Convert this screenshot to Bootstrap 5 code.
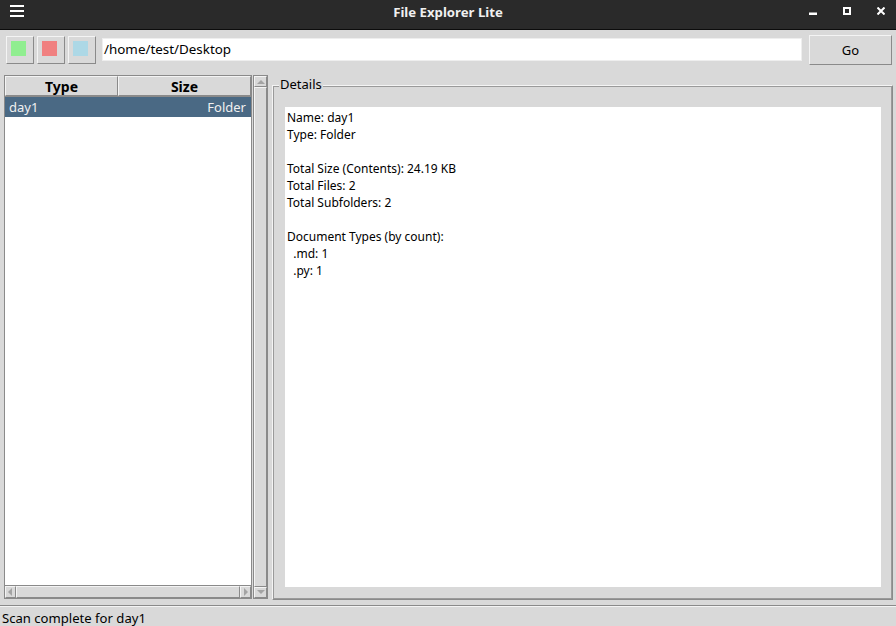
<!DOCTYPE html>
<html lang="en">
<head>
  <meta charset="UTF-8" />
  <title>File Explorer Lite</title>
  <link href="https://cdn.jsdelivr.net/npm/bootstrap@5.3.0/dist/css/bootstrap.min.css" rel="stylesheet" />
  <style>
    html, body { height: 100%; overflow: hidden; }
    body { background: #d9d9d9; font-family: "Noto Sans", sans-serif; font-size: 12px; color: #000; }
    .raised { border: 1px solid; border-color: #f4f4f4 #8a8a8a #8a8a8a #f4f4f4; }
    .app-window { width: 896px; height: 626px; }
    .title-bar { height: 30px; background: #2a2a2a; border-bottom: 1px solid #0c0c0c; color: #f0f0f0; padding: 5px 11px 0 10px; }
    .title-text { font-weight: 700; font-size: 13.2px; position: absolute; left: 0; right: 0; text-align: center; line-height: 25px; top: 0; }
    .win-btns { margin-left: auto; gap: 26px; padding-top: 2px; }
    .tool-row { padding: 5px 4px 0 6px; height: 45px; }
    .swatch-btn { width: 28px; height: 28px; background: #d9d9d9; margin-right: 3px; margin-top: 1px; padding: 0 3px 3px 0; }
    .swatch { width: 15px; height: 15px; }
    .sw-green { background: #90ee90; }
    .sw-red { background: #f08080; }
    .sw-blue { background: #add8e6; }
    .path-field { width: 700px; height: 23px; background: #fff; margin: 3px 7px 0 3px; padding-left: 1px; font-size: 13.4px; line-height: 21px; border: 1px solid #eeeeee; }
    .go-btn { width: 83px; height: 30px; background: #d9d9d9; font-size: 13px; line-height: 28px; text-align: center; }
    .body-row { padding: 0 3px 0 4px; height: 530px; }
    .left-pane { width: 264px; }
    .tree-wrap { width: 248px; height: 524px; margin-right: 1px; border: 1px solid #8a8a8a; background: #fff; }
    .tree-head { height: 21px; background: #d9d9d9; font-weight: 700; font-size: 14px; line-height: 19px; text-align: center; border-bottom: 1px solid #8a8a8a; }
    .head-type { width: 113px; }
    .tree-row { height: 20px; background: #4a6984; color: #f0f0f0; font-size: 13px; line-height: 20px; padding: 0 5px 0 4px; }
    .tree-fill { flex: 1 1 auto; }
    .hscroll { height: 13px; background: #d9d9d9; border-top: 1px solid #8a8a8a; }
    .hscroll-end { width: 11px; }
    .vscroll { width: 15px; height: 524px; background: #d9d9d9; border: 1px solid #8a8a8a; }
    .scroll-end { height: 11px; background: #d9d9d9; flex: 0 0 auto; }
    .scroll-thumb { flex: 1 1 auto; }
    .details-pane { width: 621px; margin-left: 4px; padding-top: 10px; position: relative; }
    .details-frame { height: 515px; padding: 20px 10px 11px 11px; border: 2px solid; border-color: #f4f4f4 #8a8a8a #8a8a8a #f4f4f4; outline: 1px solid #9a9a9a; outline-offset: -2px; }
    .details-label { position: absolute; top: 0; left: 7px; background: #d9d9d9; font-size: 13px; line-height: 18px; padding: 0 1px; }
    .details-text { background: #fff; height: 100%; padding: 2px 2px 1px; font-size: 12px; line-height: 17px; white-space: pre; }
    .status-row { height: 21px; border-top: 1px solid #8a8a8a; box-shadow: inset 0 1px 0 #f4f4f4; font-size: 13.1px; line-height: 16px; padding: 4px 0 0 2px; }
  </style>
</head>
<body>
<div class="app-window d-flex flex-column">
  <div class="title-bar d-flex align-items-start position-relative">
    <svg width="14" height="12" viewBox="0 0 14 12"><path d="M0 1h14M0 6h14M0 11h14" stroke="#fff" stroke-width="2"/></svg>
    <div class="title-text">File Explorer Lite</div>
    <div class="win-btns d-flex">
      <svg width="8" height="8" viewBox="0 0 8 8"><rect x="0" y="5.5" width="8" height="2.5" fill="#fff"/></svg>
      <svg width="8" height="8" viewBox="0 0 8 8"><rect x="1" y="1" width="6" height="6" fill="none" stroke="#fff" stroke-width="2"/></svg>
      <svg width="8" height="8" viewBox="0 0 8 8"><path d="M.5.5l7 7M7.500.5l-7 7" stroke="#fff" stroke-width="2"/></svg>
    </div>
  </div>

  <div class="tool-row d-flex align-items-start">
    <div class="swatch-btn raised d-flex align-items-center justify-content-center"><div class="swatch sw-green"></div></div>
    <div class="swatch-btn raised d-flex align-items-center justify-content-center"><div class="swatch sw-red"></div></div>
    <div class="swatch-btn raised d-flex align-items-center justify-content-center"><div class="swatch sw-blue"></div></div>
    <div class="path-field">/home/test/Desktop</div>
    <div class="go-btn raised">Go</div>
  </div>

  <div class="body-row d-flex">
    <div class="left-pane d-flex">
      <div class="tree-wrap d-flex flex-column">
        <div class="tree-head d-flex">
          <div class="raised head-type">Type</div>
          <div class="raised flex-grow-1">Size</div>
        </div>
        <div class="tree-row d-flex justify-content-between"><span>day1</span><span>Folder</span></div>
        <div class="tree-fill"></div>
        <div class="hscroll d-flex">
          <div class="raised hscroll-end d-flex align-items-center justify-content-center"><svg width="5" height="8" viewBox="0 0 5 8"><path d="M4 0v8L0 4z" fill="#a3a3a3"/></svg></div>
          <div class="raised flex-grow-1"></div>
          <div class="raised hscroll-end d-flex align-items-center justify-content-center"><svg width="5" height="8" viewBox="0 0 5 8"><path d="M1 0v8l4-4z" fill="#a3a3a3"/></svg></div>
        </div>
      </div>
      <div class="vscroll d-flex flex-column">
        <div class="scroll-end raised d-flex align-items-center justify-content-center"><svg width="8" height="5" viewBox="0 0 8 5"><path d="M0 5h8L4 1z" fill="#a3a3a3"/></svg></div>
        <div class="scroll-thumb raised"></div>
        <div class="scroll-end raised d-flex align-items-center justify-content-center"><svg width="8" height="5" viewBox="0 0 8 5"><path d="M0 0h8L4 4z" fill="#a3a3a3"/></svg></div>
      </div>
    </div>

    <div class="details-pane">
      <div class="details-label">Details</div>
      <div class="details-frame">
        <div class="details-text">Name: day1
Type: Folder

Total Size (Contents): 24.19 KB
Total Files: 2
Total Subfolders: 2

Document Types (by count):
  .md: 1
  .py: 1</div>
      </div>
    </div>
  </div>

  <div class="status-row">Scan complete for day1</div>
</div>
<script src="https://cdn.jsdelivr.net/npm/bootstrap@5.3.0/dist/js/bootstrap.bundle.min.js"></script>
</body>
</html>
